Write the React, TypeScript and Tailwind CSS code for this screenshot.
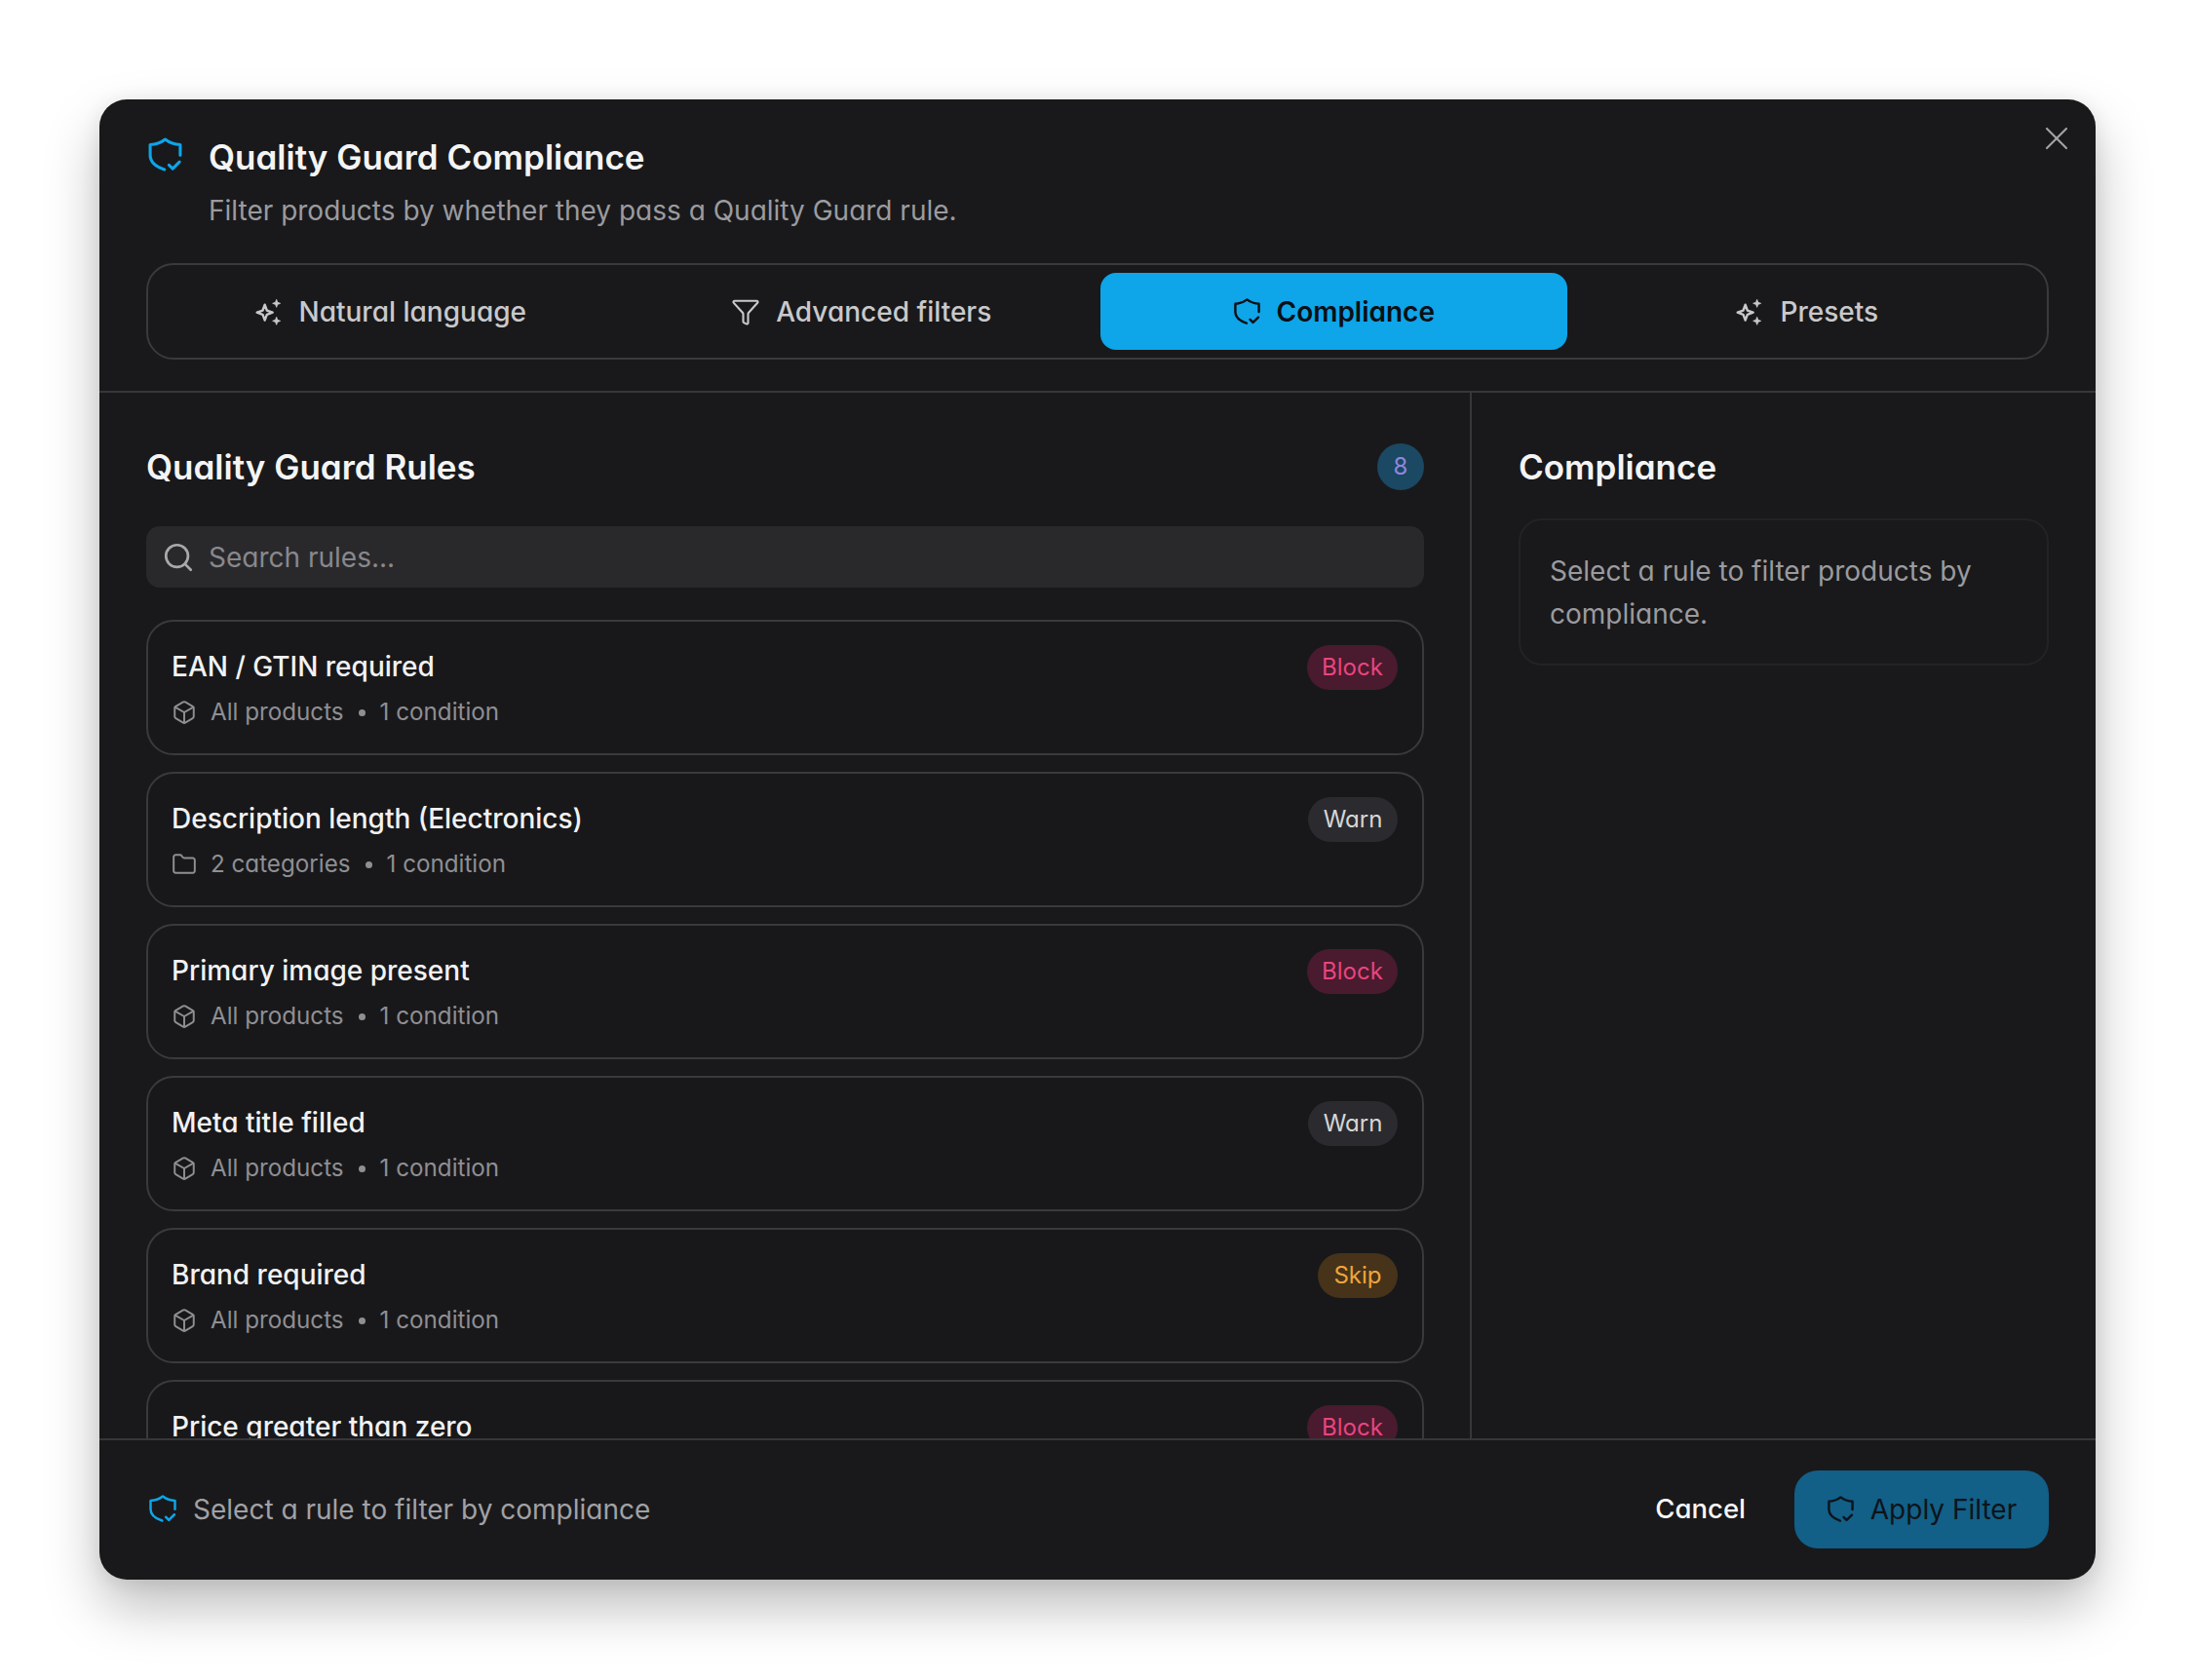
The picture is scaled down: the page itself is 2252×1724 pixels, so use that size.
import React from "react";
import { Box, Folder, Funnel, Search, X } from "lucide-react";

function ShieldMark({ className }: { className: string }) {
  return (
    <svg viewBox="0 0 24 24" fill="none" stroke="currentColor" strokeWidth="2" strokeLinecap="round" strokeLinejoin="round" className={className}>
      <path d="M22 12.5V5.5c-3.5 0-6.8-1-10-3.5-3.2 2.5-6.5 3.5-10 3.5v7c0 4 3 7.4 9.5 9.5" />
      <path d="M14.5 19l2.5 2.5 4.5-4.5" />
    </svg>
  );
}

function Spark({ className }: { className: string }) {
  return (
    <svg viewBox="0 0 24 24" fill="none" stroke="currentColor" strokeWidth="1.8" strokeLinejoin="round" className={className}>
      <path d="M9.5 6.5l1.6 4.4 4.4 1.6-4.4 1.6-1.6 4.4-1.6-4.4-4.4-1.6 4.4-1.6z" />
      <path d="M18.5 2.5l.8 2.2 2.2.8-2.2.8-.8 2.2-.8-2.2-2.2-.8 2.2-.8z" fill="currentColor" strokeWidth="0.6" />
      <path d="M18.5 16l.8 2.2 2.2.8-2.2.8-.8 2.2-.8-2.2-2.2-.8 2.2-.8z" fill="currentColor" strokeWidth="0.6" />
    </svg>
  );
}

type Level = "Block" | "Warn" | "Skip";

function LevelBadge({ level }: { level: Level }) {
  if (level === "Block") {
    return <span className="flex h-[46px] w-[93px] items-center justify-center rounded-full bg-[#4a1a2e] text-[24px] text-[#e8457f]">Block</span>;
  }
  if (level === "Warn") {
    return <span className="flex h-[46px] w-[92px] items-center justify-center rounded-full bg-[#2b2b2f] text-[24px] text-[#d6d6d8]">Warn</span>;
  }
  return <span className="flex h-[46px] w-[82px] items-center justify-center rounded-full bg-[#46331a] text-[24px] text-[#efa53a]">Skip</span>;
}

const rules: { name: string; scope: string; folder?: boolean; level: Level }[] = [
  { name: "EAN / GTIN required", scope: "All products", level: "Block" },
  { name: "Description length (Electronics)", scope: "2 categories", folder: true, level: "Warn" },
  { name: "Primary image present", scope: "All products", level: "Block" },
  { name: "Meta title filled", scope: "All products", level: "Warn" },
  { name: "Brand required", scope: "All products", level: "Skip" },
  { name: "Price greater than zero", scope: "All products", level: "Block" },
];

function RuleCard({ rule }: { rule: (typeof rules)[number] }) {
  return (
    <div className="flex h-[139px] shrink-0 items-start justify-between rounded-[28px] border-2 border-[#3a3a3d] bg-[#18181a] pl-[24px] pr-[25px] pt-[24px]">
      <div className="flex flex-col">
        <span className="text-[28px] leading-[44px] font-medium text-[#f2f2f3]">{rule.name}</span>
        <div className="mt-[3px] flex items-center text-[24.2px] leading-[44px] text-[#8f8f93]">
          {rule.folder ? (
            <Folder className="h-[26px] w-[26px]" strokeWidth={1.8} />
          ) : (
            <Box className="h-[26px] w-[26px]" strokeWidth={1.8} />
          )}
          <span className="ml-[14px]">{rule.scope}</span>
          <span className="mx-[15px] h-[7px] w-[7px] rounded-full bg-[#8f8f93]" />
          <span>1 condition</span>
        </div>
      </div>
      <LevelBadge level={rule.level} />
    </div>
  );
}

function Tab({ icon, label, active }: { icon: React.ReactNode; label: string; active?: boolean }) {
  return (
    <div
      className={
        active
          ? "flex items-center justify-center gap-[16px] rounded-[16px] bg-[#0ea5e9] text-[28px] font-semibold text-[#0b0f14]"
          : "flex items-center justify-center gap-[16px] rounded-[16px] text-[28px] font-medium text-[#c9c9cc]"
      }
    >
      {icon}
      <span>{label}</span>
    </div>
  );
}

export default function App() {
  return (
    <div className="min-h-[1724px] bg-white p-[102px] font-['Inter',sans-serif] [font-feature-settings:'cv11']">
      <div className="relative flex h-[1519px] w-[2048px] flex-col overflow-hidden rounded-[28px] bg-[#19191b] shadow-[0_28px_56px_rgba(0,0,0,0.26),0_2px_20px_rgba(0,0,0,0.08)]">
        <button className="absolute right-[20px] top-[20px] text-[#a3a3a6]">
          <X className="h-[40px] w-[40px]" strokeWidth={1.3} />
        </button>

        <div className="flex h-[301px] shrink-0 flex-col border-b-2 border-[#37373a] pl-[48px] pr-[48px]">
          <div className="mt-[36px] flex items-center gap-[26px]">
            <ShieldMark className="mb-[5px] ml-[1px] h-[37px] w-[37px] text-[#0ea5e9]" />
            <h1 className="text-[35px] leading-[46px] font-semibold text-[#f4f4f5]">Quality Guard Compliance</h1>
          </div>
          <p className="ml-[64px] mt-[10px] text-[28px] leading-[44px] text-[#9b9b9f]">Filter products by whether they pass a Quality Guard rule.</p>
          <div className="mt-[32px] grid h-[99px] grid-cols-4 gap-[6px] rounded-[28px] border-2 border-[#3a3a3d] p-[8px]">
            <Tab icon={<Spark className="h-[32px] w-[32px]" />} label="Natural language" />
            <Tab icon={<Funnel className="h-[30px] w-[30px]" strokeWidth={1.7} />} label="Advanced filters" />
            <Tab active icon={<ShieldMark className="h-[29px] w-[29px]" />} label="Compliance" />
            <Tab icon={<Spark className="h-[32px] w-[32px]" />} label="Presets" />
          </div>
        </div>

        <div className="flex min-h-0 flex-1">
          <div className="flex w-[1408px] shrink-0 flex-col overflow-hidden border-r-2 border-[#37373a] pl-[48px] pr-[47px]">
            <div className="mt-[51px] flex h-[50px] shrink-0 items-center justify-between">
              <h2 className="text-[35px] font-semibold text-[#f4f4f5]">Quality Guard Rules</h2>
              <span className="flex h-[48px] w-[48px] items-center justify-center rounded-full bg-[#1b4862] text-[24px] text-[#8f86dd]">8</span>
            </div>
            <div className="mt-[36px] flex h-[63px] shrink-0 items-center gap-[14px] rounded-[14px] bg-[#29292c] px-[16px] text-[28px] text-[#88888c]">
              <Search className="h-[34px] w-[34px] text-[#a9a9ac]" strokeWidth={1.9} />
              <span>Search rules...</span>
            </div>
            <div className="mt-[33px] flex flex-col gap-[17px]">
              {rules.map((r) => (
                <RuleCard key={r.name} rule={r} />
              ))}
            </div>
          </div>
          <div className="flex-1 pl-[48px] pr-[48px]">
            <h2 className="mt-[51px] flex h-[50px] items-center text-[35px] font-semibold text-[#f4f4f5]">Compliance</h2>
            <div className="mt-[28px] h-[151px] rounded-[24px] border-2 border-[#232326] px-[30px] pt-[30px]">
              <p className="text-[28px] leading-[44px] text-[#9b9b9f]">Select a rule to filter products by compliance.</p>
            </div>
          </div>
        </div>

        <div className="flex h-[145px] shrink-0 items-center justify-between border-t-2 border-[#37373a] pb-[2px] pl-[50px] pr-[48px]">
          <div className="flex items-center gap-[16px]">
            <ShieldMark className="mb-[2px] h-[30px] w-[30px] text-[#0ea5e9]" />
            <span className="text-[28px] text-[#a1a1a5]">Select a rule to filter by compliance</span>
          </div>
          <div className="flex items-center gap-[50px]">
            <span className="text-[27.5px] font-medium text-[#f7f7f8]">Cancel</span>
            <div className="flex h-[80px] w-[261px] items-center justify-center gap-[16px] rounded-[24px] bg-[#125f88] text-[28px] font-normal text-[#0d1419]">
              <ShieldMark className="h-[29px] w-[29px]" />
              <span>Apply Filter</span>
            </div>
          </div>
        </div>
      </div>
    </div>
  );
}
